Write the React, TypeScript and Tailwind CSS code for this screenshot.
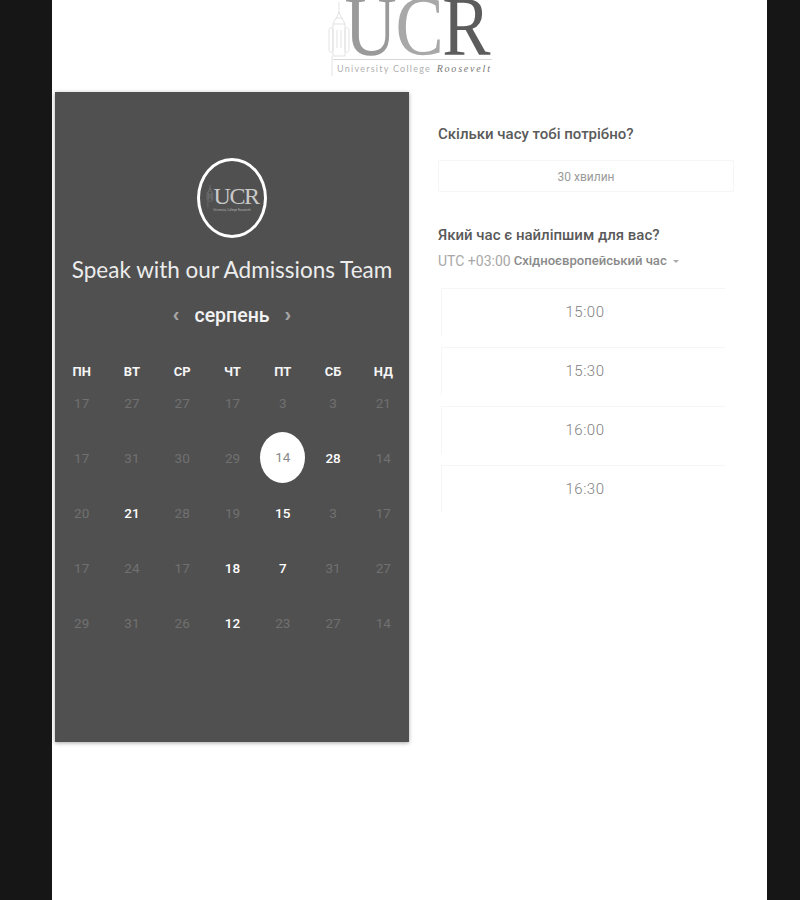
const rows: [string, boolean][][] = [
  [["17",false],["27",false],["27",false],["17",false],["3",false],["3",false],["21",false]],
  [["17",false],["31",false],["30",false],["29",false],["14",false],["28",true],["14",false]],
  [["20",false],["21",true],["28",false],["19",false],["15",true],["3",false],["17",false]],
  [["17",false],["24",false],["17",false],["18",true],["7",true],["31",false],["27",false]],
  [["29",false],["31",false],["26",false],["12",true],["23",false],["27",false],["14",false]],
];
const days = ["ПН","ВТ","СР","ЧТ","ПТ","СБ","НД"];
const times = ["15:00","15:30","16:00","16:30"];

function Tower({ className, stroke }: { className: string; stroke: string }) {
  return (
    <svg viewBox="0 0 24 78" className={className} fill="none" stroke={stroke} strokeWidth="0.8">
      <path d="M12 2V14M9 19L12 12L15 19M6 24L9 18H15L18 24M6 24H18M2 30C2 27 6 27 6 30V50C6 53 2 53 2 50ZM18 30C18 27 22 27 22 30V50C22 53 18 53 18 50Z" />
      <path d="M6 24V56M18 24V56M10 30V48M14 30V48M6 56H18M5 56V76" />
    </svg>
  );
}

export default function App() {
  return (
    <div className="min-h-[900px] bg-[#161616] font-['Roboto',sans-serif]">
      <div className="ml-[52px] w-[715px] h-[900px] bg-white overflow-hidden">
        <header className="h-[92px] flex justify-center">
          <div className="relative w-[165px] h-[78px]">
            <Tower className="absolute left-0 top-0 w-[24px] h-[78px] opacity-60" stroke="#c8c8c8" />
            <div className="ml-[6px] w-[159px] flex flex-col">
              <div className="h-[63px] mt-[-3px] flex items-start justify-end border-b border-[#d8d8d8] font-['Liberation_Serif',serif] text-[84px] leading-[60px] tracking-[-1.5px]">
                <span className="inline-block origin-right scale-x-[0.86] translate-x-[-3px] whitespace-nowrap">
                  <span className="text-[#9a9a9a]">U</span>
                  <span className="text-[#a8a8a8]">C</span>
                  <span className="text-[#5c5c5c]">R</span>
                </span>
              </div>
              <div className="ml-[4px] mt-[2px] text-[9px] leading-[14px] tracking-[1.25px] text-[#b0b0b0] whitespace-nowrap font-['Lato',sans-serif]">
                University College <span className="ml-[2px] text-[10px] font-['Liberation_Serif',serif] italic text-[#777] tracking-[1.8px]">Roosevelt</span>
              </div>
            </div>
          </div>
        </header>
        <main className="flex items-start">
          <section className="ml-[3px] w-[354px] h-[650px] bg-[#505050] shadow-[0_1px_4px_rgba(0,0,0,0.35)] pt-[66px] flex flex-col items-center">
            <div className="w-[70px] h-[80px] rounded-[50%] border-[3px] border-white flex items-center justify-center">
              <div className="relative flex flex-col items-center">
                <div className="flex items-center">
                  <Tower className="w-[8px] h-[24px]" stroke="#a5a5a5" />
                  <span className="font-['Liberation_Serif',serif] text-[#c9c9c9] text-[24px] leading-[24px] tracking-[-1.5px]">UCR</span>
                </div>
                <span className="text-[3px] leading-[4px] text-[#aaa] whitespace-nowrap">University College Roosevelt</span>
              </div>
            </div>
            <h1 className="mt-[17px] text-[22.5px] leading-[30px] font-normal text-[#ececec] whitespace-nowrap font-['Lato',sans-serif]">Speak with our Admissions Team</h1>
            <div className="mt-[16px] flex items-center h-[30px] text-white">
              <span className="text-[#a5a5a5] text-[20px] leading-[24px] mt-[-4px] font-bold font-['Liberation_Sans',sans-serif]">‹</span>
              <span className="mx-[15px] text-[19.5px] leading-[30px] font-medium text-[#f2f2f2]">серпень</span>
              <span className="text-[#a5a5a5] text-[20px] leading-[24px] mt-[-4px] font-bold font-['Liberation_Sans',sans-serif]">›</span>
            </div>
            <div className="mt-[34px] ml-[1px] w-[352px] grid grid-cols-7">
              {days.map((d) => (
                <div key={d} className="h-[14px] flex items-center justify-center text-[13px] font-bold text-[#f5f5f5]">{d}</div>
              ))}
            </div>
            <div className="mt-[14px] ml-[1px] w-[352px] grid grid-cols-7 gap-y-[34px]">
              {rows.flat().map(([n, on], i) =>
                i === 11 ? (
                  <div key={i} className="h-[21px] flex items-center justify-center">
                    <div className="w-[45px] h-[51px] shrink-0 mt-[-3px] rounded-[50%] bg-white flex items-center justify-center text-[13.5px] text-[#8a8a8a]">{n}</div>
                  </div>
                ) : (
                  <div key={i} className={`h-[21px] flex items-center justify-center text-[13.5px] ${on ? "text-white font-medium" : "text-[#707070]"}`}>{n}</div>
                )
              )}
            </div>
          </section>
          <section className="ml-[29px] w-[296px] pt-[32px]">
            <h2 className="text-[15px] leading-[20px] font-medium text-[#5a5a5a] whitespace-nowrap">Скільки часу тобі потрібно?</h2>
            <div className="mt-[16px] h-[32px] border border-[#f6f6f6] rounded-[2px] flex items-center justify-center text-[12px] text-[#9a9a9a] pt-[1px]">30 хвилин</div>
            <h2 className="mt-[33px] text-[15px] leading-[20px] font-medium text-[#5a5a5a] whitespace-nowrap">Який час є найліпшим для вас?</h2>
            <div className="mt-[6px] flex items-center text-[14px] leading-[20px] text-[#a8a8a8] whitespace-nowrap">
              UTC +03:00
              <span className="ml-[3px] text-[13.1px] font-medium text-[#8a8a8a]">Східноєвропейський час</span>
              <span className="ml-[6px] w-0 h-0 border-x-[3px] border-x-transparent border-t-[3px] border-t-[#aaaaaa]"></span>
            </div>
            <ul className="mt-[17px] ml-[3px] flex flex-col w-[284px]">
              {times.map((t) => (
                <li key={t} className="h-[59px] pb-[11px]">
                  <div className="h-full border-t border-l border-[#f6f6f6] flex items-center justify-center text-[15px] tracking-[0.5px] font-light text-[#808080] pl-[3px]">{t}</div>
                </li>
              ))}
            </ul>
          </section>
        </main>
      </div>
    </div>
  );
}
